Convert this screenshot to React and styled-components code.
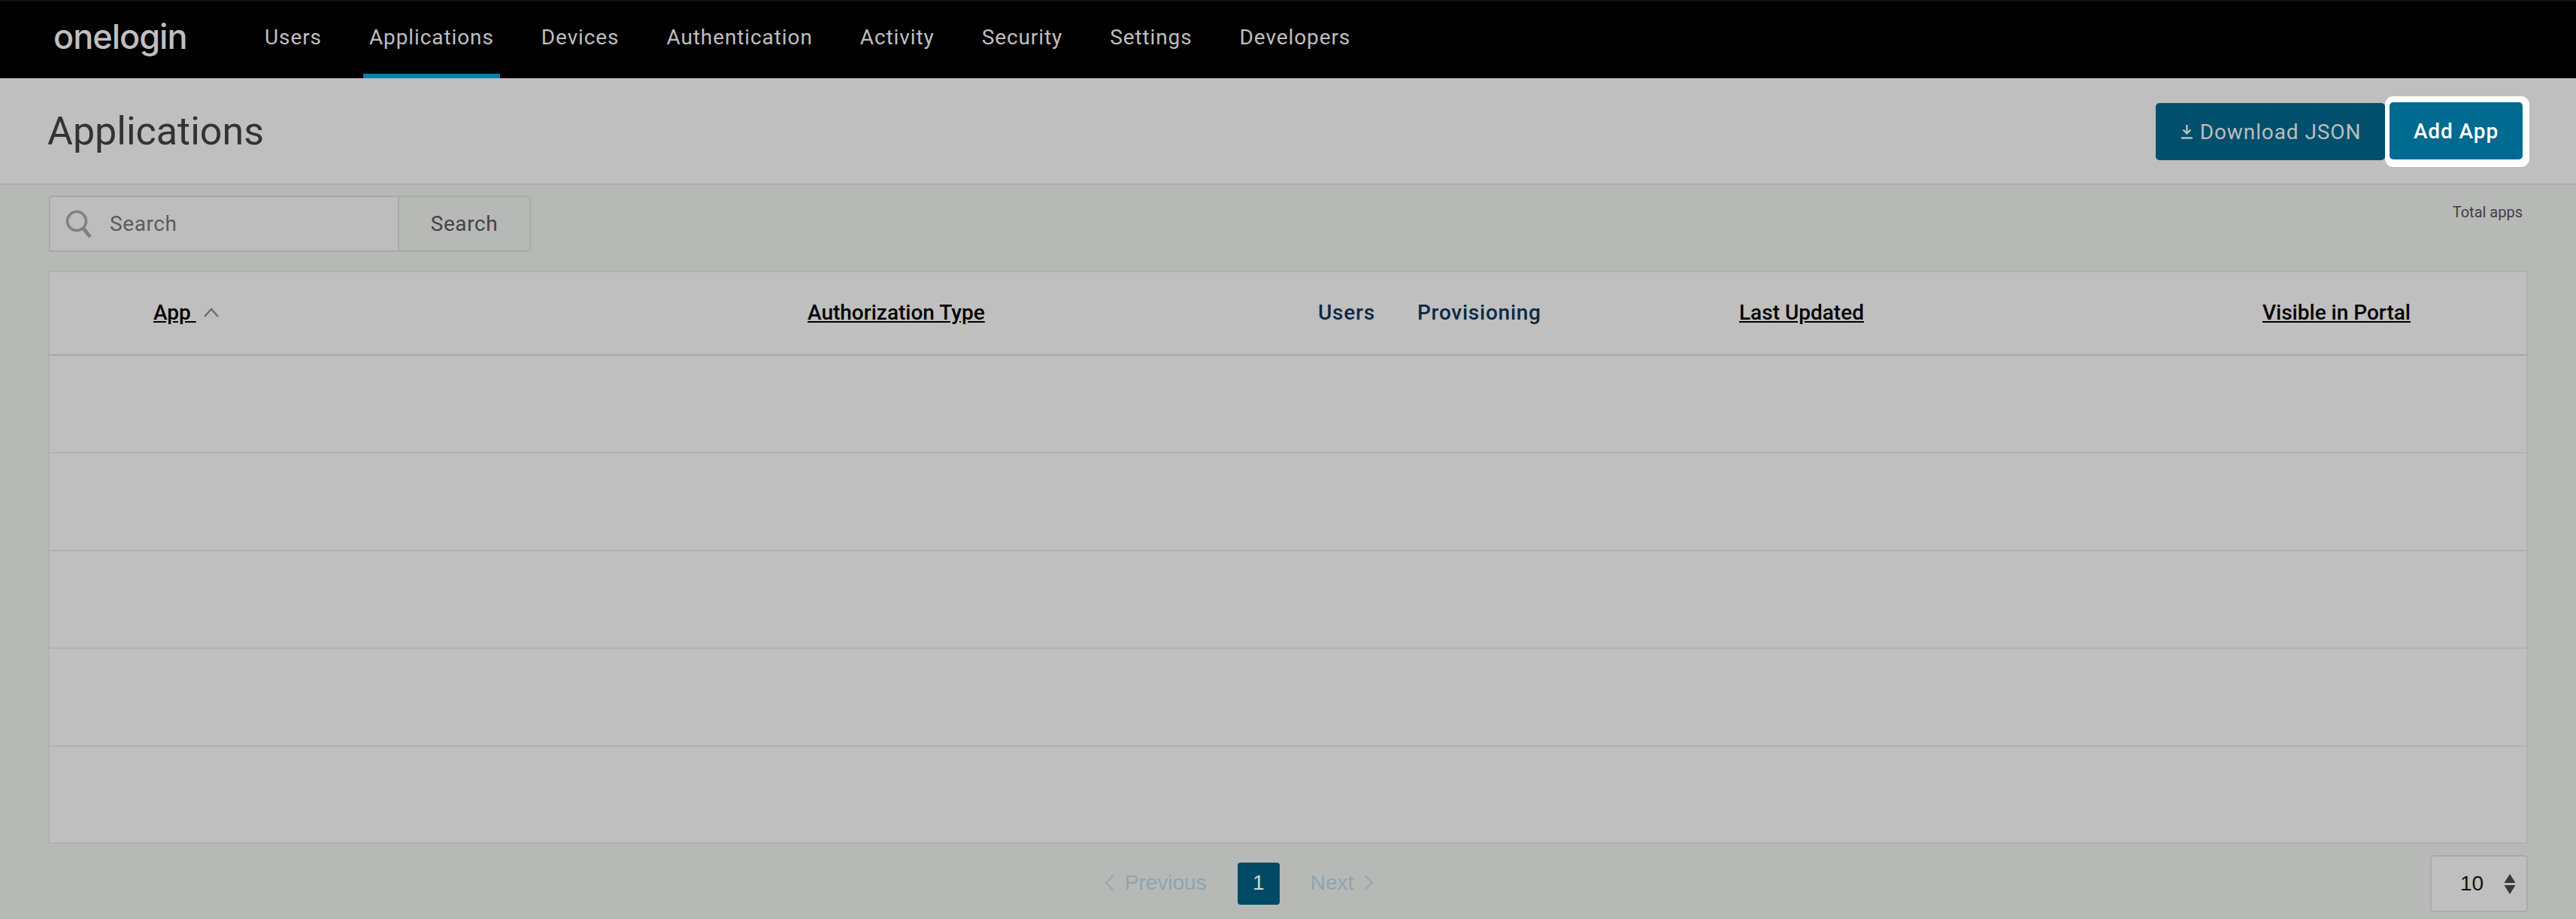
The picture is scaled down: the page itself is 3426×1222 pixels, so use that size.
import React from "react";
import styled, { createGlobalStyle } from "styled-components";

const navItems = ["Users", "Applications", "Devices", "Authentication", "Activity", "Security", "Settings", "Developers"];

const columns = [
  { label: "App", sorted: true, link: true },
  { label: "Authorization Type", link: true },
  { label: "Users" },
  { label: "Provisioning" },
  { label: "Last Updated", link: true },
  { label: "Visible in Portal", link: true },
];

const App = () => {
  return (
    <Page>
      <GlobalStyle />
      <TopBar>
        <Logo>onelogin</Logo>
        <Nav>
          {navItems.map((item) => (
            <NavItem key={item} $active={item === "Applications"}>
              {item}
            </NavItem>
          ))}
        </Nav>
      </TopBar>

      <Header>
        <Title>Applications</Title>
        <Actions>
          <DownloadButton>
            <svg width="17" height="20" viewBox="0 0 17 20" fill="none" stroke="currentColor" strokeWidth="2.4">
              <path d="M8.5 1v11M3.5 7.5l5 5 5-5M1 18.5h15" />
            </svg>
            Download JSON
          </DownloadButton>
          <Highlight>
            <AddButton>Add App</AddButton>
          </Highlight>
        </Actions>
      </Header>

      <Content>
        <Toolbar>
          <SearchBox>
            <SearchField>
              <svg width="36" height="38" viewBox="0 0 36 38" fill="none" stroke="#7f8284" strokeWidth="3.6">
                <circle cx="15" cy="15" r="12.5" />
                <path d="M24 25l9 11" strokeWidth="5" />
              </svg>
              <span>Search</span>
            </SearchField>
            <SearchButton>Search</SearchButton>
          </SearchBox>
          <TotalApps>Total apps</TotalApps>
        </Toolbar>

        <Table>
          <HeadRow>
            {columns.map((col) => (
              <HeadCell key={col.label} $link={col.link}>
                <span>{col.sorted ? `${col.label} ` : col.label}</span>
                {col.sorted && (
                  <svg width="20" height="13" viewBox="0 0 20 13" fill="none" stroke="#6b6c6c" strokeWidth="2.4">
                    <path d="M1 12l9-10 9 10" />
                  </svg>
                )}
              </HeadCell>
            ))}
          </HeadRow>
          {[0, 1, 2, 3, 4].map((row) => (
            <Row key={row} />
          ))}
        </Table>

        <Footer>
          <Pager>
            <PagerLink>
              <svg width="13" height="22" viewBox="0 0 13 22" fill="none" stroke="#a3a8a8" strokeWidth="2.6">
                <path d="M11.5 1.5L2 11l9.500 9.500" />
              </svg>
              Previous
            </PagerLink>
            <PageNumber>1</PageNumber>
            <PagerLink>
              Next
              <svg width="13" height="22" viewBox="0 0 13 22" fill="none" stroke="#a3a8a8" strokeWidth="2.6">
                <path d="M1.500 1.500L11 11l-9.500 9.500" />
              </svg>
            </PagerLink>
          </Pager>
          <PageSize>
            <span>10</span>
            <svg width="16" height="27" viewBox="0 0 16 27">
              <path d="M8 0l7.500 12H.5zM.5 15h15L8 27z" fill="#3a3a3a" />
            </svg>
          </PageSize>
        </Footer>
      </Content>
    </Page>
  );
};

export default App;

const GlobalStyle = createGlobalStyle`
  html,
  body {
    margin: 0;
    background: #b7b9b7;
  }
`;

const Page = styled.div`
  width: 3426px;
  height: 1222px;
  overflow: hidden;
  background: #b7b9b7;
  font-family: Roboto, "Liberation Sans", sans-serif;
`;

const TopBar = styled.div`
  display: flex;
  align-items: stretch;
  height: 102px;
  background: #000;
  border-top: 2px solid #111;
  padding-left: 71px;
`;

const Logo = styled.div`
  width: 273px;
  font-family: Inter, sans-serif;
  font-size: 45px;
  font-weight: 500;
  line-height: 94px;
  letter-spacing: -1px;
  color: #bfbfbf;
`;

const Nav = styled.nav`
  display: flex;
  gap: 47px;
`;

const NavItem = styled.a`
  padding: 0 8px;
  font-size: 28px;
  line-height: 96px;
  letter-spacing: 0.9px;
  color: #bfbfbf;
  border-bottom: 6px solid ${(props) => (props.$active ? "#0082ad" : "transparent")};
`;

const Header = styled.header`
  display: flex;
  align-items: center;
  justify-content: space-between;
  height: 140px;
  padding: 0 62px 0 63px;
  background: #bfbfbf;
  border-bottom: 2px solid #b0b1b0;
`;

const Title = styled.h1`
  margin: 0;
  font-size: 52px;
  font-weight: 400;
  color: #333;
`;

const Actions = styled.div`
  display: flex;
  align-items: center;
  padding-top: 2px;
`;

const ActionButton = styled.button`
  height: 76px;
  border: 0;
  border-radius: 5px;
  font-family: inherit;
  font-size: 28px;
  letter-spacing: 0.9px;
`;

const DownloadButton = styled(ActionButton)`
  display: flex;
  align-items: center;
  justify-content: center;
  gap: 9px;
  width: 305px;
  padding-left: 7px;
  background: #00506d;
  color: #bdbdbd;
`;

const Highlight = styled.div`
  display: flex;
  padding: 8px 9px 10px 6px;
  background: #fff;
  border-radius: 11px;
`;

const AddButton = styled(ActionButton)`
  width: 177px;
  background: #006a90;
  color: #fff;
  font-weight: 500;
`;

const Content = styled.main`
  padding: 14px 64px 0;
`;

const Toolbar = styled.div`
  display: flex;
  justify-content: space-between;
  height: 100px;
`;

const SearchBox = styled.div`
  display: flex;
  width: 641px;
  height: 75px;
  box-sizing: border-box;
  border: 2px solid #a9aaa9;
  border-radius: 4px;
  background: #bdbdbd;
  margin-left: 1px;
`;

const SearchField = styled.div`
  flex: 1;
  display: flex;
  align-items: center;
  gap: 23px;
  padding-left: 20px;
  font-size: 28px;
  letter-spacing: 0.6px;
  color: #5a5c5c;
`;

const SearchButton = styled.div`
  display: flex;
  align-items: center;
  justify-content: center;
  width: 173px;
  background: #b7b9b7;
  border-left: 2px solid #a9aaa9;
  font-size: 28px;
  letter-spacing: 0.6px;
  color: #444;
`;

const TotalApps = styled.div`
  align-self: flex-start;
  margin: 10px 7px 0 0;
  font-size: 20px;
  line-height: 24px;
  color: #3f3f3f;
`;

const Table = styled.div`
  width: 3298px;
  height: 762px;
  box-sizing: border-box;
  background: #bfbfbf;
  border: 2px solid #b1b2b1;
`;

const HeadRow = styled.div`
  display: grid;
  grid-template-columns: 870px 679px 132px 428px 696px 1fr;
  align-items: center;
  height: 111px;
  box-sizing: border-box;
  padding: 0 0 3px 138px;
  border-bottom: 2px solid #a7a8a7;
`;

const HeadCell = styled.div`
  display: flex;
  align-items: center;
  gap: 10px;
  font-size: 28px;
  font-weight: 500;
  letter-spacing: ${(props) => (props.$link ? "0" : "0.75px")};
  white-space: pre;
  color: ${(props) => (props.$link ? "#000" : "#0a2a44")};
  text-decoration: ${(props) => (props.$link ? "underline" : "none")};
`;

const Row = styled.div`
  height: 130px;
  box-sizing: border-box;
  border-bottom: 2px solid #b1b2b1;

  &:last-child {
    border-bottom: 0;
  }
`;

const Footer = styled.div`
  position: relative;
  display: flex;
  justify-content: center;
  padding: 25px 130px 0 0;
`;

const Pager = styled.div`
  display: flex;
  align-items: center;
  gap: 41px;
  height: 56px;
  font-family: "Liberation Sans", Arial, sans-serif;
  font-size: 28px;
`;

const PagerLink = styled.span`
  display: flex;
  align-items: center;
  gap: 14px;
  padding-bottom: 2px;
  color: #8fa5b0;
`;

const PageNumber = styled.span`
  display: flex;
  align-items: center;
  justify-content: center;
  width: 56px;
  height: 56px;
  padding-bottom: 2px;
  box-sizing: border-box;
  border-radius: 4px;
  background: #004a66;
  color: #d4d4d4;
`;

const PageSize = styled.div`
  position: absolute;
  top: 15px;
  right: 0;
  display: flex;
  align-items: center;
  gap: 27px;
  box-sizing: border-box;
  width: 130px;
  height: 76px;
  padding-left: 38px;
  background: #bfbfbf;
  border: 2px solid #a9aaa9;
  border-radius: 5px;
  font-family: "Liberation Sans", Arial, sans-serif;
  font-size: 28px;
  color: #111;
`;
